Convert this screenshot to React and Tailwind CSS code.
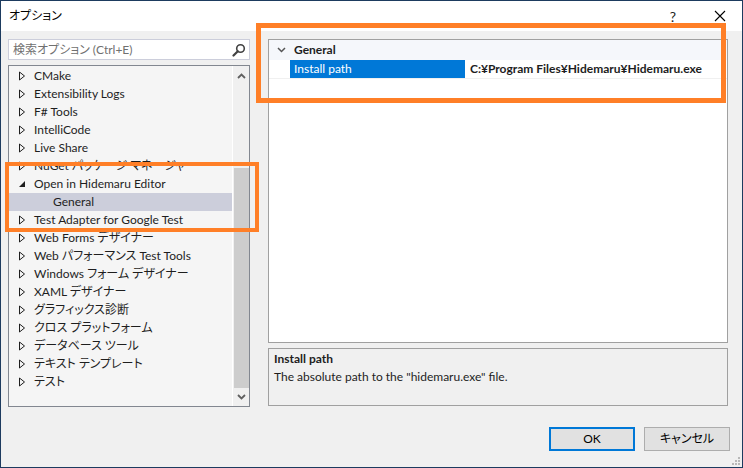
import React from "react";

const font = {
  fontFamily: '"Segoe UI", Lato, "Noto Sans CJK JP", sans-serif',
  fontFeatureSettings: '"palt"',
};

const treeItems = [
  { label: "CMake" },
  { label: "Extensibility Logs" },
  { label: "F# Tools" },
  { label: "IntelliCode" },
  { label: "Live Share" },
  { label: "NuGet パッケージ マネージャー" },
  { label: "Open in Hidemaru Editor", open: true },
  { label: "General", child: true, selected: true },
  { label: "Test Adapter for Google Test" },
  { label: "Web Forms デザイナー" },
  { label: "Web パフォーマンス Test Tools" },
  { label: "Windows フォーム デザイナー" },
  { label: "XAML デザイナー" },
  { label: "グラフィックス診断" },
  { label: "クロス プラットフォーム" },
  { label: "データベース ツール" },
  { label: "テキスト テンプレート" },
  { label: "テスト" },
];

function Arrow({ open }) {
  if (open) {
    return (
      <svg width="8" height="8" viewBox="0 0 8 8">
        <path d="M7 1 L7 7 L1 7 Z" fill="#1e1e1e" />
      </svg>
    );
  }
  return (
    <svg width="8" height="10" viewBox="0 0 8 10">
      <path d="M1.5 1 L6.5 5 L1.5 9 Z" fill="none" stroke="#1e1e1e" strokeWidth="1" />
    </svg>
  );
}

function TreeRow({ item }) {
  return (
    <div
      className={`h-[18px] flex items-center text-[12px] text-[#1e1e1e] ${
        item.selected ? "bg-[#cccedb]" : ""
      }`}
    >
      {item.child ? (
        <span className="pl-[44px]">{item.label}</span>
      ) : (
        <>
          <span className="w-[25px] flex justify-end pr-[8px]">
            <Arrow open={item.open} />
          </span>
          <span className="whitespace-nowrap">{item.label}</span>
        </>
      )}
    </div>
  );
}

export default function App() {
  return (
    <div
      style={font}
      className="relative w-[743px] h-[468px] border border-[#1d3b5f] flex flex-col bg-[#f0f0f0] overflow-hidden"
    >
      {/* Title bar */}
      <div className="h-[30px] bg-white flex items-center shrink-0">
        <span className="pl-[8px] text-[12px] text-black flex-1">オプション</span>
        <span className="text-[14px] text-[#222] w-[14px] text-center mr-[34px]">?</span>
        <svg width="12" height="12" viewBox="0 0 12 12" className="mr-[16px]">
          <path d="M1 1 L11 11 M11 1 L1 11" stroke="#000" strokeWidth="1.1" />
        </svg>
      </div>

      {/* Body */}
      <div className="flex pt-[8px] pl-[7px] h-[376px] shrink-0">
        {/* Left column */}
        <div className="w-[242px] flex flex-col">
          <div className="h-[21px] bg-white border border-[#cccedb] flex items-center pl-[4px] pr-[3px]">
            <span className="flex-1 text-[12px] text-[#707070]">検索オプション (Ctrl+E)</span>
            <svg width="14" height="14" viewBox="0 0 14 14">
              <circle cx="8.5" cy="5.5" r="3.8" fill="none" stroke="#424242" strokeWidth="1.6" />
              <path d="M5.8 8.2 L1.5 12.5" stroke="#424242" strokeWidth="2.2" strokeLinecap="round" />
            </svg>
          </div>
          <div className="mt-[5px] h-[342px] border border-[#828790] bg-[#f5f5f5] flex">
            <div className="flex-1 flex flex-col pt-[1px]">
              {treeItems.map((item) => (
                <TreeRow key={item.label} item={item} />
              ))}
            </div>
            <div className="w-[17px] border-l border-white bg-[#f0f0f0] flex flex-col items-center">
              <div className="h-[17px] flex items-center justify-center mt-[1px]">
                <svg width="9" height="6" viewBox="0 0 9 6">
                  <path d="M1 5 L4.5 1.5 L8 5" fill="none" stroke="#606060" strokeWidth="1.8" />
                </svg>
              </div>
              <div className="mt-[84px] w-[15px] h-[220px] bg-[#cdcdcd]" />
              <div className="h-[17px] flex items-center justify-center">
                <svg width="9" height="6" viewBox="0 0 9 6">
                  <path d="M1 1 L4.5 4.5 L8 1" fill="none" stroke="#606060" strokeWidth="1.8" />
                </svg>
              </div>
            </div>
          </div>
        </div>

        {/* Right column */}
        <div className="ml-[18px] w-[460px] flex flex-col">
          <div className="h-[304px] bg-white border border-[#a0a0a0] flex flex-col">
            <div className="h-[20px] bg-[#f5f7fb] flex items-center text-[12px] font-bold text-[#1e1e1e]">
              <span className="w-[25px] flex justify-center">
                <svg width="9" height="6" viewBox="0 0 9 6">
                  <path d="M1 1 L4.5 4.5 L8 1" fill="none" stroke="#555" strokeWidth="1.5" />
                </svg>
              </span>
              <span>General</span>
            </div>
            <div className="h-[19px] flex border-b border-[#f0f0f0] text-[12px]">
              <div className="w-[21px]" />
              <div className="w-[175px] bg-[#0078d7] text-white flex items-center pl-[4px]">Install path</div>
              <div className="flex-1 flex items-center pl-[5px] font-bold text-[#1e1e1e] whitespace-nowrap">
                C:¥Program Files¥Hidemaru¥Hidemaru.exe
              </div>
            </div>
          </div>
          <div className="mt-[5px] h-[58px] border border-[#a0a0a0] bg-[#f0f0f0] px-[5px] pt-[1px] text-[12px] text-[#1e1e1e]">
            <div className="font-bold leading-[18px]">Install path</div>
            <div className="leading-[18px]">The absolute path to the "hidemaru.exe" file.</div>
          </div>
        </div>
      </div>

      {/* Buttons */}
      <div className="flex justify-end pr-[12px] mt-[20px] gap-[9px]">
        <button className="w-[86px] h-[24px] border-2 border-[#0078d7] bg-[#e1e1e1] text-[12px] text-black">
          OK
        </button>
        <button className="w-[86px] h-[24px] border border-[#adadad] bg-[#e1e1e1] text-[12px] text-black">
          キャンセル
        </button>
      </div>

      {/* Resize grip */}
      <svg width="9" height="9" viewBox="0 0 9 9" className="absolute right-[1px] bottom-[1px]">
        <rect x="6" y="0" width="2" height="2" fill="#b8b8b8" />
        <rect x="3" y="3" width="2" height="2" fill="#b8b8b8" />
        <rect x="6" y="3" width="2" height="2" fill="#b8b8b8" />
        <rect x="0" y="6" width="2" height="2" fill="#b8b8b8" />
        <rect x="3" y="6" width="2" height="2" fill="#b8b8b8" />
        <rect x="6" y="6" width="2" height="2" fill="#b8b8b8" />
      </svg>

      {/* Annotation highlights */}
      <div className="absolute left-[4px] top-[161px] w-[254px] h-[70px] border-[4px] border-[#ff7f27]" />
      <div className="absolute left-[255px] top-[22px] w-[470px] h-[80px] border-[5px] border-[#ff7f27]" />
    </div>
  );
}
